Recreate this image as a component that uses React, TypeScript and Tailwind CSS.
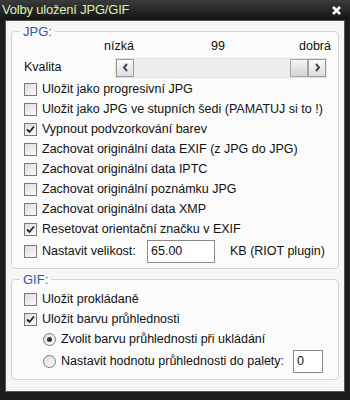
import { useState } from 'react';

function CheckBox({ checked }: { checked?: boolean }) {
  return (
    <span className="w-[13px] h-[13px] shrink-0 border border-[#7a7a7a] bg-gradient-to-br from-[#dcdcdc] to-[#fbfbfb] flex items-center justify-center">
      {checked && (
        <svg width="9" height="9" viewBox="0 0 9 9">
          <path d="M1 4.5 L3.5 7 L8 1.5" fill="none" stroke="#222" strokeWidth="1.8" />
        </svg>
      )}
    </span>
  );
}

function Radio({ checked }: { checked?: boolean }) {
  return (
    <span className="w-[13px] h-[13px] shrink-0 rounded-full border border-[#7a7a7a] bg-gradient-to-br from-[#dcdcdc] to-[#fbfbfb] flex items-center justify-center">
      {checked && <span className="w-[5px] h-[5px] rounded-full bg-[#333]" />}
    </span>
  );
}

function Row({ label, checked }: { label: string; checked?: boolean }) {
  return (
    <div className="h-[20px] flex items-center gap-[5px]">
      <CheckBox checked={checked} />
      <span>{label}</span>
    </div>
  );
}

export default function App() {
  const [quality] = useState(99);

  return (
    <div
      className="w-[350px] h-[400px] bg-[#1c1c1c] flex flex-col text-[12.5px] text-[#111]"
      style={{ fontFamily: '"Liberation Sans", Arial, sans-serif' }}
    >
      {/* Title bar */}
      <div className="h-[20px] flex items-center justify-between pl-[2px] pr-[8px] bg-gradient-to-b from-[#3c3c3c] to-[#141414]">
        <span className="text-[13px] text-[#d6f0b8] tracking-[-0.2px]">Volby uložení JPG/GIF</span>
        <svg width="11" height="11" viewBox="0 0 11 11">
          <path d="M2 2 L9 9 M9 2 L2 9" stroke="#fff" strokeWidth="2.6" />
        </svg>
      </div>

      {/* Body */}
      <div className="flex-1 mx-[5px] mb-[8px] border border-[#555] bg-[#f6f6f6] px-[5px] pt-[1px] flex flex-col">
        {/* JPG group */}
        <fieldset className="border border-[#d4d4d4] rounded-[4px] pl-[12px] pr-[10px] pb-[4px] bg-[#fbfbfb]">
          <legend className="px-[3px] -ml-[4px] text-[13px] text-[#2c58a8]">JPG:</legend>
          <div className="h-[18px] flex items-center pl-[80px] -mr-[3px] -mt-[4px]">
            <span className="w-[107px]">nízká</span>
            <span className="flex-1">{quality}</span>
            <span>dobrá</span>
          </div>
          <div className="h-[24px] flex items-center">
            <span className="w-[91px]">Kvalita</span>
            <div className="w-[212px] h-[20px] flex bg-[#ededed] border border-[#e0e0e0]">
              <div className="w-[18px] h-full border border-[#9a9a9a] bg-gradient-to-b from-[#fbfbfb] to-[#dedede] flex items-center justify-center">
                <svg width="7" height="9" viewBox="0 0 7 9">
                  <path d="M5 1 L2 4.5 L5 8" fill="none" stroke="#3b4a60" strokeWidth="2" />
                </svg>
              </div>
              <div className="flex-1" />
              <div className="w-[18px] h-full border border-[#aaa] bg-gradient-to-b from-[#f4f4f4] to-[#d4d4d4]" />
              <div className="w-[18px] h-full border border-[#9a9a9a] bg-gradient-to-b from-[#fbfbfb] to-[#dedede] flex items-center justify-center">
                <svg width="7" height="9" viewBox="0 0 7 9">
                  <path d="M2 1 L5 4.5 L2 8" fill="none" stroke="#3b4a60" strokeWidth="2" />
                </svg>
              </div>
            </div>
          </div>
          <Row label="Uložit jako progresivní JPG" />
          <Row label="Uložit jako JPG ve stupních šedi (PAMATUJ si to !)" />
          <Row label="Vypnout podvzorkování barev" checked />
          <Row label="Zachovat originální data EXIF (z JPG do JPG)" />
          <Row label="Zachovat originální data IPTC" />
          <Row label="Zachovat originální poznámku JPG" />
          <Row label="Zachovat originální data XMP" />
          <Row label="Resetovat orientační značku v EXIF" checked />
          <div className="h-[24px] flex items-center gap-[5px]">
            <CheckBox />
            <span className="w-[100px]">Nastavit velikost:</span>
            <div className="w-[68px] h-[23px] border border-[#8a8a8a] bg-white pl-[3px] flex items-center">65.00</div>
            <span className="ml-[10px]">KB (RIOT plugin)</span>
          </div>
        </fieldset>

        {/* GIF group */}
        <fieldset className="mt-[1px] border border-[#d4d4d4] rounded-[4px] pl-[12px] pr-[10px] pb-[6px] bg-[#fbfbfb]">
          <legend className="px-[3px] -ml-[4px] text-[13px] text-[#2c58a8]">GIF:</legend>
          <Row label="Uložit prokládaně" />
          <Row label="Uložit barvu průhlednosti" checked />
          <div className="pl-[19px]">
            <div className="h-[20px] flex items-center gap-[5px]">
              <Radio checked />
              <span>Zvolit barvu průhlednosti při ukládání</span>
            </div>
            <div className="h-[24px] flex items-center gap-[5px]">
              <Radio />
              <span>Nastavit hodnotu průhlednosti do palety:</span>
              <div className="ml-[4px] w-[30px] h-[23px] border border-[#8a8a8a] bg-white pl-[3px] flex items-center">0</div>
            </div>
          </div>
        </fieldset>
      </div>
    </div>
  );
}
